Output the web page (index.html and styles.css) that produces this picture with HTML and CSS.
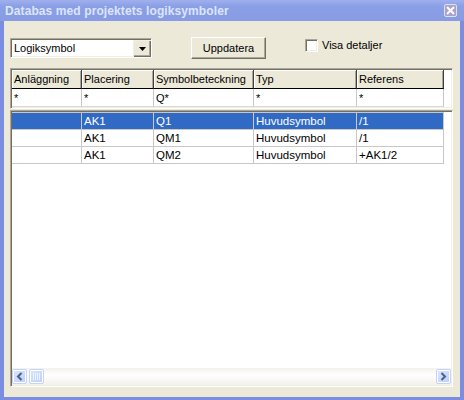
FILE: index.html
```html
<!DOCTYPE html>
<html lang="sv">
<head>
    <meta charset="UTF-8">
    <title>Databas med projektets logiksymboler</title>
    <link rel="stylesheet" href="styles.css">
</head>
<body>

    <div class="window">
        <div class="titlebar">
            <span class="title">Databas med projektets logiksymboler</span>
            <span class="close">
                <svg width="9" height="9" viewBox="0 0 9 9"><path d="M1 1L8 8M8 1L1 8" stroke="#fff" stroke-width="2"/></svg>
            </span>
        </div>

        <div class="client">
            <!-- top controls -->
            <div class="toolbar">
                <div class="combo">
                    <span class="combo-text">Logiksymbol</span>
                    <span class="combo-btn">
                        <svg width="7" height="4" viewBox="0 0 7 4"><path d="M0 0H7L3.5 4Z" fill="#000"/></svg>
                    </span>
                </div>
                <div class="btn">Uppdatera</div>
                <div class="check"><span class="box"></span>Visa detaljer</div>
            </div>

            <!-- filter grid -->
            <div class="filter-grid">
                <div class="row head">
                    <div class="cell c1">Anläggning</div>
                    <div class="cell c2">Placering</div>
                    <div class="cell c3">Symbolbeteckning</div>
                    <div class="cell c4">Typ</div>
                    <div class="cell c5">Referens</div>
                </div>
                <div class="row filter">
                    <div class="cell c1">*</div>
                    <div class="cell c2">*</div>
                    <div class="cell c3">Q*</div>
                    <div class="cell c4">*</div>
                    <div class="cell c5">*</div>
                </div>
            </div>

            <!-- result grid -->
            <div class="data-grid">
                <div class="rows">
                    <div class="row data selected">
                        <div class="cell c1"></div>
                        <div class="cell c2">AK1</div>
                        <div class="cell c3">Q1</div>
                        <div class="cell c4">Huvudsymbol</div>
                        <div class="cell c5">/1</div>
                    </div>
                    <div class="row data">
                        <div class="cell c1"></div>
                        <div class="cell c2">AK1</div>
                        <div class="cell c3">QM1</div>
                        <div class="cell c4">Huvudsymbol</div>
                        <div class="cell c5">/1</div>
                    </div>
                    <div class="row data">
                        <div class="cell c1"></div>
                        <div class="cell c2">AK1</div>
                        <div class="cell c3">QM2</div>
                        <div class="cell c4">Huvudsymbol</div>
                        <div class="cell c5">+AK1/2</div>
                    </div>
                </div>

                <div class="hscroll">
                    <span class="sb-btn">
                        <svg width="7" height="9" viewBox="0 0 7 9"><path d="M5.5 1L2 4.5L5.5 8" fill="none" stroke="#4d6185" stroke-width="2"/></svg>
                    </span>
                    <span class="sb-thumb">
                        <svg width="7" height="7" viewBox="0 0 7 7"><path d="M0.5 0V7M2.5 0V7M4.5 0V7M6.5 0V7" stroke="#eef3fe" stroke-width="1"/></svg>
                    </span>
                    <span class="sb-track"></span>
                    <span class="sb-btn">
                        <svg width="7" height="9" viewBox="0 0 7 9"><path d="M1.5 1L5 4.5L1.5 8" fill="none" stroke="#4d6185" stroke-width="2"/></svg>
                    </span>
                </div>
            </div>
        </div>
    </div>

</body>
</html>
```

FILE: styles.css
```css
body {
    margin: 0;
    font-family: 'Liberation Sans', Arial, sans-serif;
    font-size: 11px;
    color: #000;
}

.window {
    width: 464px;
    height: 400px;
    box-sizing: border-box;
    display: flex;
    flex-direction: column;
    background: #7b8de0;
}

.titlebar {
    height: 21px;
    display: flex;
    align-items: center;
    justify-content: space-between;
    padding: 0 7px 0 5px;
    background: linear-gradient(#9fb0ec, #8a9fe6 30%, #889ce4);
}

.title {
    color: #dce5fa;
    font-weight: bold;
    font-size: 12px;
    letter-spacing: 0.1px;
}

.close {
    width: 11px;
    height: 11px;
    display: flex;
    align-items: center;
    justify-content: center;
    background: #a9a3cc;
    border: 1px solid #dfe0f4;
    border-radius: 2px;
}

.client {
    flex: 1;
    margin: 0 4px 3px 4px;
    background: #ece9d8;
    display: flex;
    flex-direction: column;
    padding: 16px 7px 10px 6px;
}

/* toolbar */
.toolbar {
    height: 22px;
    display: flex;
    align-items: center;
}

.combo {
    width: 142px;
    height: 20px;
    box-sizing: border-box;
    display: flex;
    align-items: stretch;
    background: #fff;
    border-top: 1px solid #aca899;
    border-left: 1px solid #aca899;
    border-right: 1px solid #fff;
    border-bottom: 1px solid #fff;
    box-shadow: inset 1px 1px #716f64, inset -1px -1px #f1efe2;
}

.combo-text {
    flex: 1;
    padding: 3px 0 0 3px;
}

.combo-btn {
    width: 16px;
    margin: 1px 1px 1px 0;
    display: flex;
    align-items: center;
    justify-content: center;
    background: #ece9d8;
    border-top: 1px solid #f1efe2;
    border-left: 1px solid #f1efe2;
    box-shadow: inset -1px -1px #aca899, 1px 1px #716f64;
}

.btn {
    margin-left: 39px;
    width: 75px;
    height: 22px;
    box-sizing: border-box;
    display: flex;
    align-items: center;
    justify-content: center;
    background: #ece9d8;
    border-top: 1px solid #fff;
    border-left: 1px solid #fff;
    border-right: 1px solid #716f64;
    border-bottom: 1px solid #716f64;
    box-shadow: inset -1px -1px #aca899;
}

.check {
    margin-left: 39px;
    align-self: flex-start;
    margin-top: 2px;
    display: flex;
    align-items: flex-start;
    line-height: 13px;
}

.check .box {
    width: 13px;
    height: 13px;
    box-sizing: border-box;
    margin-right: 4px;
    background: #fff;
    border-top: 1px solid #aca899;
    border-left: 1px solid #aca899;
    border-right: 1px solid #fff;
    border-bottom: 1px solid #fff;
    box-shadow: inset 1px 1px #716f64, inset -1px -1px #f1efe2;
}

/* grids */
.filter-grid,
.data-grid {
    background: #fff;
    border-top: 1px solid #aca899;
    border-left: 1px solid #aca899;
    border-right: 1px solid #fff;
    border-bottom: 1px solid #fff;
    box-shadow: inset 1px 1px #716f64, inset -1px -1px #f1efe2;
    padding: 1px;
}

.filter-grid {
    margin-top: 9px;
    height: 41px;
    box-sizing: border-box;
}

.data-grid {
    margin-top: 1px;
    flex: 1;
    display: flex;
    flex-direction: column;
}

.rows {
    flex: 1;
}

.row {
    display: flex;
}

.cell {
    box-sizing: border-box;
    padding-left: 2px;
    white-space: nowrap;
    overflow: hidden;
    border-right: 1px solid #c8c8c8;
}

.c1 { width: 70px; }
.c2 { width: 72px; }
.c3 { width: 100px; }
.c4 { width: 103px; }
.c5 { width: 87px; }

.head .cell {
    height: 19px;
    line-height: 18px;
    background: #ece9d8;
    border-right: 1px solid #404040;
    border-bottom: 1px solid #000;
    box-shadow: inset 1px 1px #fff, inset -1px 0 #aca899;
}

.filter .cell {
    height: 18px;
    line-height: 18px;
    border-bottom: 1px solid #d8d8d8;
}

.data .cell {
    height: 17px;
    line-height: 17px;
    font-size: 11.5px;
    border-bottom: 1px solid #c8c8c8;
}

.data:first-child .cell {
    border-top: 1px solid #c8c8c8;
    height: 18px;
}

.selected .cell {
    background: #316ac5;
    color: #fff;
}

/* horizontal scrollbar */
.hscroll {
    height: 17px;
    display: flex;
    align-items: center;
    background: linear-gradient(#f3f1ec, #fefefe 40%, #f3f1ec);
}

.sb-btn,
.sb-thumb {
    width: 15px;
    height: 15px;
    box-sizing: border-box;
    display: flex;
    align-items: center;
    justify-content: center;
    background: linear-gradient(135deg, #dbe6fe, #bccffb);
    border: 1px solid #c4d4fa;
    border-radius: 2px;
    box-shadow: 0 0 0 1px #fff inset;
}

.sb-thumb {
    margin-left: 2px;
}

.sb-track {
    flex: 1;
}
```
